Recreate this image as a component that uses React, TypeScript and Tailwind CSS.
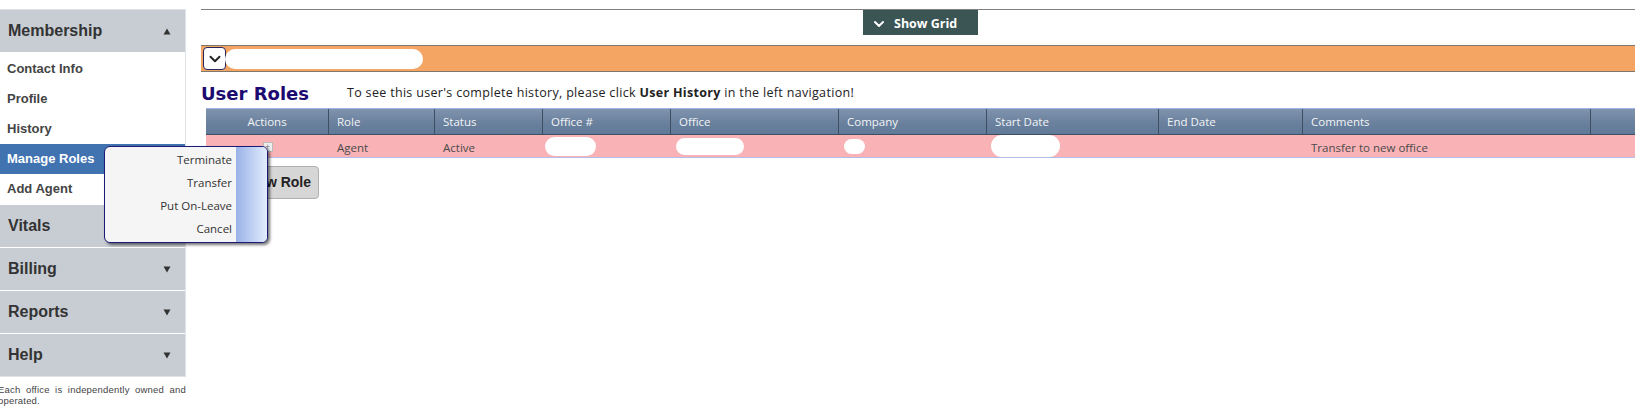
import { ChevronDown } from 'lucide-react';

const cols = 'grid grid-cols-[123px_106px_108px_128px_168px_148px_172px_144px_288px_1fr]';
const headers = ['Role', 'Status', 'Office #', 'Office', 'Company', 'Start Date', 'End Date', 'Comments', ''];
const links = ['Contact Info', 'Profile', 'History', 'Manage Roles', 'Add Agent'];

const Arrow = ({ up }: { up?: boolean }) => (
  <svg width="8" height="7" viewBox="0 0 8 7" className="mr-[14px] fill-[#333]">
    <path d={up ? 'M4 0.5 L7.5 6.5 L0.5 6.5 Z' : 'M0.5 0.5 L7.5 0.5 L4 6.5 Z'} />
  </svg>
);

const SideHeader = ({ label, up }: { label: string; up?: boolean }) => (
  <div className="flex h-[42px] items-center justify-between bg-[#c8cdd3] pl-2 text-[16px] font-bold text-[#333]">
    {label}
    <Arrow up={up} />
  </div>
);

const Sidebar = () => (
  <aside className="w-[186px] shrink-0 pt-[9px] font-['Liberation_Sans',sans-serif]">
    <div className="flex flex-col gap-px border-y border-r border-[#dfe2e6] bg-white">
      <div>
        <SideHeader label="Membership" up />
        <div className="pt-[2px]">
          {links.map((l) => (
            <div
              key={l}
              className={
                l === 'Manage Roles'
                  ? 'flex h-[30px] items-center bg-[#4173b0] pl-[7px] text-[13px] font-bold text-white'
                  : 'flex h-[30px] items-center pl-[7px] text-[13px] font-bold text-[#444]'
              }
            >
              {l}
            </div>
          ))}
        </div>
      </div>
      <SideHeader label="Vitals" />
      <SideHeader label="Billing" />
      <SideHeader label="Reports" />
      <SideHeader label="Help" />
    </div>
    <p className="mt-[7px] ml-[-2px] text-justify text-[9.5px] leading-[11px] tracking-[0.2px] text-[#444]">
      Each office is independently owned and operated.
    </p>
  </aside>
);

const Blob = ({ w, h }: { w: string; h: string }) => (
  <span className={`block rounded-full bg-white ${w} ${h}`} />
);

const RolesTable = () => (
  <div className="ml-[5px] font-['Open_Sans',sans-serif] text-[11.5px]">
    <div className={`${cols} h-[27px] border-t border-b border-t-[#9db5e8] border-b-[#3f4f63] bg-gradient-to-b from-[#8094ae] via-[#6c829e] to-[#5f7a97] text-[#f2f4f7]`}>
      <div className="flex items-center justify-center border-r border-[#3f4f63]">Actions</div>
      {headers.map((h, i) => (
        <div key={i} className="flex items-center border-r border-[#3f4f63] pl-2 last:border-r-0">
          {h}
        </div>
      ))}
    </div>
    <div className={`${cols} h-[23px] border-b border-[#b4bde6] bg-[#f9b3b7] text-[#4a4a4a]`}>
      <div className="flex items-center justify-center">
        <span className="mb-[-1px] flex h-[10px] w-[10px] items-center justify-center border border-[#bbb] bg-[#eee] text-[9px] leading-none text-[#777]">+</span>
      </div>
      <div className="flex items-center pt-[3px] pl-2">Agent</div>
      <div className="flex items-center pt-[3px] pl-2">Active</div>
      <div className="flex items-center pl-[2px]"><Blob w="w-[51px]" h="h-[19px]" /></div>
      <div className="flex items-center pl-[5px]"><Blob w="w-[68px]" h="h-[17px]" /></div>
      <div className="flex items-center pl-[5px]"><Blob w="w-[21px]" h="h-[15px]" /></div>
      <div className="flex items-center pl-[4px]"><Blob w="w-[69px]" h="h-[22px]" /></div>
      <div />
      <div className="flex items-center pt-[3px] pl-2">Transfer to new office</div>
      <div />
    </div>
  </div>
);

const ActionMenu = () => (
  <div className="absolute top-[146px] left-[104px] flex h-[97px] w-[164px] overflow-hidden rounded-[6px] border border-[#1c1c78] bg-[#f5f5f5] font-['Open_Sans',sans-serif] text-[11.5px] text-[#333] shadow-[2px_2px_3px_rgba(0,0,0,0.55)]">
    <div className="flex flex-1 flex-col items-end pt-[1px] pr-[4px]">
      {['Terminate', 'Transfer', 'Put On-Leave', 'Cancel'].map((m) => (
        <div key={m} className="flex h-[23px] items-center">{m}</div>
      ))}
    </div>
    <div className="w-[31px] bg-gradient-to-r from-[#9ab2e6] to-[#e2ecfd]" />
  </div>
);

export default function App() {
  return (
    <div className="relative flex h-[416px] w-[1635px] overflow-hidden bg-white">
      <Sidebar />
      <main className="ml-[15px] min-w-0 flex-1 pt-[9px]">
        <div className="flex h-[36px] justify-center border-t border-[#808080]">
          <div className="ml-[5px] flex h-[25px] w-[115px] items-center gap-[7px] bg-[#3b5454] pt-[3px] pl-[8px] font-['Open_Sans',sans-serif] text-[12.5px] font-bold text-white">
            <ChevronDown size={16} strokeWidth={3} />
            Show Grid
          </div>
        </div>
        <div className="flex h-[27px] items-center border-y border-[#80776c] bg-[#f4a564] pl-[2px]">
          <button className="flex h-[23px] w-[23px] items-center justify-center rounded-[4px] border border-[#26265e] bg-white text-[#222]">
            <ChevronDown size={18} strokeWidth={2.5} />
          </button>
          <span className="ml-[-1px] block h-[20px] w-[198px] rounded-full bg-white" />
        </div>
        <div className="flex h-[36px] items-center pt-[6px]">
          <h1 className="w-[146px] font-['DejaVu_Sans',sans-serif] text-[18px] font-bold text-[#1c0a70]">User Roles</h1>
          <p className="font-['Open_Sans',sans-serif] text-[12.5px] tracking-[0.32px] text-[#222]">
            To see this user's complete history, please click <b>User History</b> in the left navigation!
          </p>
        </div>
        <RolesTable />
        <button className="mt-2 ml-[40px] flex h-[33px] w-[78px] items-center justify-end rounded-[4px] border border-[#b0b0b0] bg-[#d6d6d6] pr-[7px] font-['Liberation_Sans',sans-serif] text-[14px] font-bold text-[#222]">
          New Role
        </button>
      </main>
      <ActionMenu />
    </div>
  );
}
